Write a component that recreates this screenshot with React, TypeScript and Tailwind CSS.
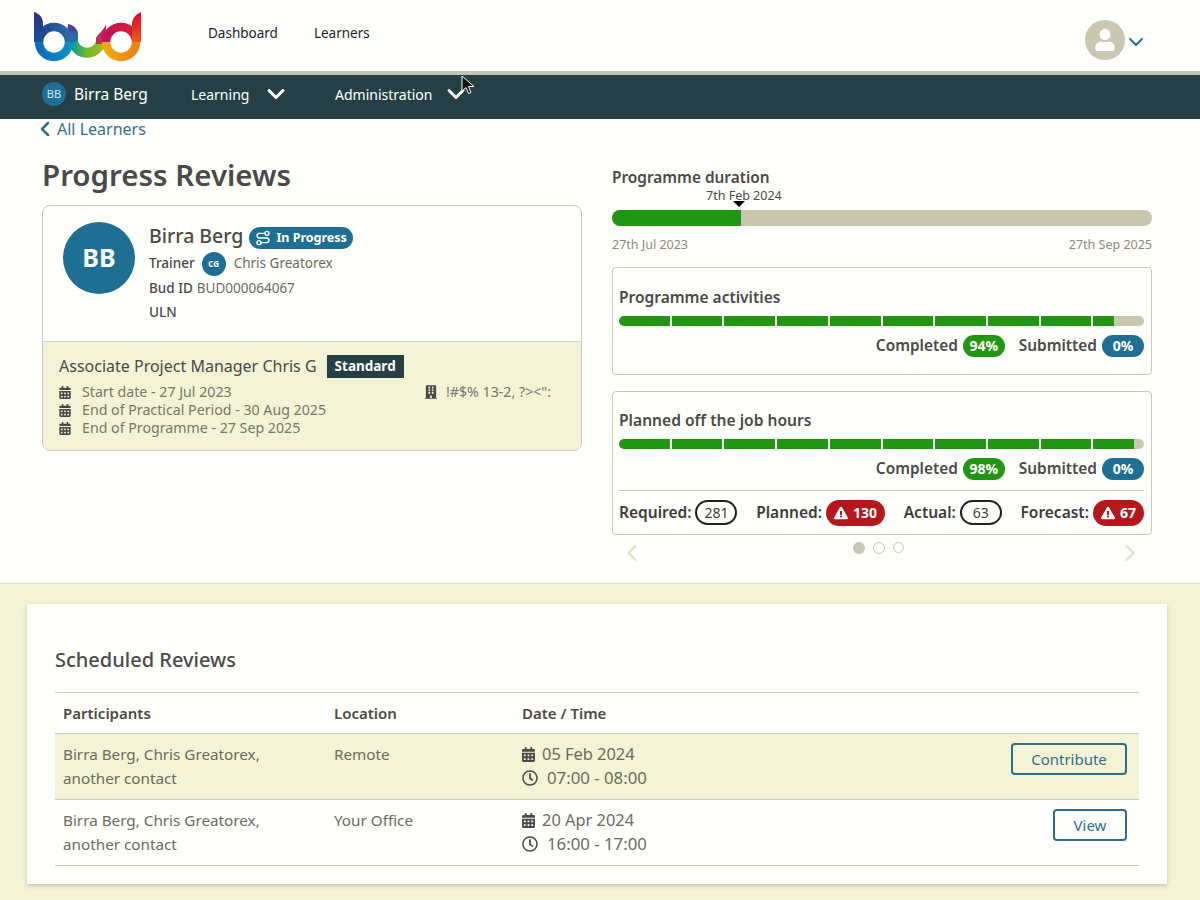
import { ChevronDown, ChevronLeft, ChevronRight, Route } from 'lucide-react'
import { FaBuilding, FaCalendarAlt, FaExclamationTriangle, FaRegClock, FaUser } from 'react-icons/fa'

function Logo() {
  return (
    <svg width="112" height="54" viewBox="32 9 112 54" fill="none">
      <defs>
        <linearGradient id="bStem" x1="0" y1="0" x2="0" y2="1">
          <stop offset="0" stopColor="#352a80" />
          <stop offset="1" stopColor="#14559f" />
        </linearGradient>
        <linearGradient id="bTop" x1="0" y1="0" x2="1" y2="0">
          <stop offset="0" stopColor="#1b3f8c" />
          <stop offset="1" stopColor="#2c6aa8" />
        </linearGradient>
        <linearGradient id="bBottom" x1="0" y1="0" x2="1" y2="0">
          <stop offset="0" stopColor="#0d6db8" />
          <stop offset="1" stopColor="#0a8fc8" />
        </linearGradient>
        <linearGradient id="uLeft" x1="0" y1="0" x2="0" y2="1">
          <stop offset="0" stopColor="#6a2a85" />
          <stop offset="1" stopColor="#0a86b8" />
        </linearGradient>
        <linearGradient id="uBottom" x1="0" y1="0" x2="1" y2="0">
          <stop offset="0" stopColor="#12a08c" />
          <stop offset="0.5" stopColor="#6fb82c" />
          <stop offset="1" stopColor="#a8b820" />
        </linearGradient>
        <linearGradient id="uRight" x1="0" y1="0" x2="0" y2="1">
          <stop offset="0" stopColor="#c9105f" />
          <stop offset="1" stopColor="#b83a50" />
        </linearGradient>
        <linearGradient id="dTop" x1="0" y1="0" x2="1" y2="0">
          <stop offset="0" stopColor="#c4105e" />
          <stop offset="1" stopColor="#d8202c" />
        </linearGradient>
        <linearGradient id="dBottom" x1="0" y1="0" x2="1" y2="0">
          <stop offset="0" stopColor="#f0a810" />
          <stop offset="1" stopColor="#ee8418" />
        </linearGradient>
        <linearGradient id="dStem" x1="0" y1="0" x2="0" y2="1">
          <stop offset="0" stopColor="#e00030" />
          <stop offset="1" stopColor="#e8601c" />
        </linearGradient>
      </defs>
      <path d="M73 42a14.500 14.500 0 0 0 28 0" stroke="url(#uBottom)" strokeWidth="10" />
      <path d="M68 24c5 1 10 5 10 10v8H66z" fill="url(#uLeft)" />
      <path d="M106 24c-1 5-8 10-10 14v6h10z" fill="url(#uRight)" />
      <path d="M39 42a15 15 0 0 1 30 0" stroke="url(#bTop)" strokeWidth="8.500" />
      <path d="M39 42a15 15 0 0 0 30 0" stroke="url(#bBottom)" strokeWidth="8.500" />
      <path d="M34 12c6 2 9 6 9 12v18h-9z" fill="url(#bStem)" />
      <path d="M106 42a15 15 0 0 1 30 0" stroke="url(#dTop)" strokeWidth="8.500" />
      <path d="M106 42a15 15 0 0 0 30 0" stroke="url(#dBottom)" strokeWidth="8.500" />
      <path d="M141 12c-6 3-9 7-9 12v18h9z" fill="url(#dStem)" />
    </svg>
  )
}

function Segments({ value }: { value: number }) {
  return (
    <div className="flex h-[10px] gap-[2px]">
      {Array.from({ length: 10 }).map((_, i) => {
        const fill = Math.max(0, Math.min(1, value / 10 - i)) * 100
        return (
          <div
            key={i}
            className={`flex-1 overflow-hidden bg-[#c8c6ae] ${i === 0 ? 'rounded-l-full' : ''} ${i === 9 ? 'rounded-r-full' : ''}`}
          >
            <div className="h-full bg-[#229512]" style={{ width: `${fill}%` }} />
          </div>
        )
      })}
    </div>
  )
}

function Badges({ completed }: { completed: string }) {
  return (
    <div className="mt-[8px] flex items-center justify-end text-[15.400px] font-semibold text-[#4a4a4a]">
      <span>Completed</span>
      <span className="ml-[5px] flex h-[22px] w-[42px] items-center justify-center rounded-full bg-[#229512] text-[14px] font-bold text-white">
        {completed}
      </span>
      <span className="ml-[14px]">Submitted</span>
      <span className="ml-[5px] flex h-[22px] w-[42px] items-center justify-center rounded-full bg-[#1f6f94] text-[14px] font-bold text-white">
        0%
      </span>
    </div>
  )
}

function Stat({ label, value, warn }: { label: string; value: string; warn?: boolean }) {
  return (
    <div className="flex items-center text-[15.500px] font-semibold text-[#3c3c3c]">
      <span>{label}</span>
      {warn ? (
        <span className="ml-[4px] flex h-[26px] items-center gap-[5px] rounded-full bg-[#b5181c] px-[8px] text-[14px] font-bold text-white">
          <FaExclamationTriangle className="h-[14px] w-[14px]" />
          {value}
        </span>
      ) : (
        <span className="ml-[4px] flex h-[25px] w-[42px] items-center justify-center rounded-full border-2 border-[#222] text-[14px] font-normal">
          {value}
        </span>
      )}
    </div>
  )
}

function DateLine({ children }: { children: string }) {
  return (
    <div className="flex h-[18px] items-center gap-[11px]">
      <FaCalendarAlt className="h-[13px] w-[12px] text-[#4a4a4a]" />
      <span>{children}</span>
    </div>
  )
}

function ReviewRow({ location, date, time, action, shaded, buttonWidth }: { location: string; date: string; time: string; action: string; shaded?: boolean; buttonWidth: string }) {
  return (
    <div className={`flex h-[66px] border-b border-[#c9c8b4] pt-[8px] text-[15.250px] leading-[24px] text-[#6b6b60] ${shaded ? 'bg-[#f5f3d6]' : ''}`}>
      <div className="w-[279px] pl-[8px]">
        Birra Berg, Chris Greatorex,
        <br />
        another contact
      </div>
      <div className="w-[188px]">{location}</div>
      <div className="flex-1">
        <div className="flex items-center gap-[7px] text-[16.400px]">
          <FaCalendarAlt className="h-[15px] w-[13px] text-[#4a4a4a]" />
          {date}
        </div>
        <div className="flex items-center gap-[9px] text-[16.800px]">
          <FaRegClock className="h-[16px] w-[16px] text-[#4a4a4a]" />
          {time}
        </div>
      </div>
      <div className="pr-[12px] pt-[1px]">
        <button className={`h-[32px] rounded-[4px] border-2 border-[#2c6f8c] text-[15px] text-[#2c6f8c] ${buttonWidth}`}>
          {action}
        </button>
      </div>
    </div>
  )
}

export default function App() {
  return (
    <div className="relative h-[900px] overflow-hidden bg-[#fffffb] font-['Noto_Sans',sans-serif]">
      {/* top bar */}
      <header className="flex h-[71px] items-start pl-[32px]">
        <div className="w-[176px] pt-[9px]">
          <Logo />
        </div>
        <nav className="flex gap-[36px] pt-[23px] text-[13.500px] leading-[20px] text-[#1c1c2c]">
          <a>Dashboard</a>
          <a>Learners</a>
        </nav>
        <div className="ml-auto mr-[52px] flex items-center pt-[20px]">
          <div className="flex h-[40px] w-[40px] items-center justify-center rounded-full bg-[#c9c8b0]">
            <FaUser className="h-[22px] w-[22px] text-white" />
          </div>
          <ChevronDown className="-ml-[1px] mt-[4px] h-[24px] w-[24px] text-[#1f6f94]" strokeWidth={2} />
        </div>
      </header>
      <nav className="flex h-[48px] items-center border-t-[4px] border-[#bfc4bb] bg-[#263f45] pb-[6px] pl-[42px] text-[15.500px] text-white">
        <div className="flex h-[24px] w-[24px] items-center justify-center rounded-full bg-[#1f6f94] text-[11px] text-[#cfeeff]">BB</div>
        <span className="ml-[8px] w-[117px] pt-[1px]">Birra Berg</span>
        <span className="w-[71px] text-[14px]">Learning</span>
        <ChevronDown className="h-[28px] w-[28px]" strokeWidth={2.500} />
        <span className="ml-[45px] w-[107px] text-[14px]">Administration</span>
        <ChevronDown className="h-[28px] w-[28px]" strokeWidth={2.500} />
      </nav>

      <main className="h-[465px] border-b border-[#e0dfc4] px-[42px]">
        <a className="flex h-[20px] items-center text-[16px] text-[#33708a]">
          <ChevronLeft className="-ml-[9px] h-[24px] w-[24px]" strokeWidth={2.500} />
          <span>All Learners</span>
        </a>
        <div className="flex gap-[30px]">
          {/* learner details */}
          <div className="w-[540px]">
            <h1 className="mt-[16px] text-[29.500px] font-semibold leading-[40px] text-[#4a4a4a]">Progress Reviews</h1>
            <div className="mt-[10px] h-[246px] overflow-hidden rounded-[8px] border border-[#c9c8b4]">
              <div className="flex h-[135px] pl-[20px] pt-[16px]">
                <div className="flex h-[72px] w-[72px] items-center justify-center rounded-full bg-[#1f6f94] text-[25px] font-bold text-white">BB</div>
                <div className="ml-[14px] text-[13.500px] text-[#6b6b60]">
                  <div className="flex h-[28px] items-center">
                    <span className="text-[19.500px] font-medium text-[#4a4a4a]">Birra Berg</span>
                    <span className="ml-[6px] mt-[4px] flex h-[22px] items-center gap-[5px] rounded-full bg-[#1f6f94] px-[6px] text-[12.500px] font-bold text-white">
                      <Route className="h-[16px] w-[16px]" />
                      In Progress
                    </span>
                  </div>
                  <div className="mt-[1px] flex h-[25px] items-center">
                    <span className="font-medium text-[#4a4a4a]">Trainer</span>
                    <span className="ml-[7px] flex h-[24px] w-[24px] items-center justify-center rounded-full bg-[#1f6f94] text-[8px] font-bold text-white">CG</span>
                    <span className="ml-[8px]">Chris Greatorex</span>
                  </div>
                  <div className="flex h-[24px] items-center gap-[4px]">
                    <span className="font-medium text-[#4a4a4a]">Bud ID</span>
                    <span>BUD000064067</span>
                  </div>
                  <div className="flex h-[24px] items-center font-medium text-[#4a4a4a]">ULN</div>
                </div>
              </div>
              <div className="h-[110px] border-t border-[#d8d6bc] bg-[#f5f3d6] px-[16px] pt-[11px] text-[14.200px] text-[#77776a]">
                <div className="flex h-[25px] items-center">
                  <span className="text-[16px] text-[#4a4a4a]">Associate Project Manager Chris G</span>
                  <span className="ml-[10px] mt-[2px] flex h-[23px] items-center bg-[#263f45] px-[8px] text-[13.500px] font-bold text-white">Standard</span>
                </div>
                <div className="mt-[5px] flex">
                  <div className="w-[366px]">
                    <DateLine>Start date - 27 Jul 2023</DateLine>
                    <DateLine>End of Practical Period - 30 Aug 2025</DateLine>
                    <DateLine>End of Programme - 27 Sep 2025</DateLine>
                  </div>
                  <div className="flex h-[18px] items-center gap-[9px]">
                    <FaBuilding className="h-[14px] w-[12px] text-[#4a4a4a]" />
                    <span>!#$% 13-2, ?&gt;&lt;":</span>
                  </div>
                </div>
              </div>
            </div>
          </div>

          {/* progress */}
          <div className="w-[540px]">
            <div className="mt-[28px] text-[15.400px] font-semibold leading-[22px] text-[#4a4a4a]">Programme duration</div>
            <div className="relative mt-[21px] h-[16px] rounded-full bg-[#c8c6ae]">
              <div className="h-full w-[129px] rounded-l-full bg-[#229512]" />
              <div className="absolute bottom-[23px] left-[94px] text-[12.500px] leading-[14px] text-[#4a4a4a]">7th Feb 2024</div>
              <div className="absolute -top-[9px] left-[121px] h-0 w-0 border-x-[6px] border-t-[6px] border-x-transparent border-t-black" />
            </div>
            <div className="mt-[10px] flex justify-between text-[12.500px] leading-[18px] text-[#8a8a7c]">
              <span>27th Jul 2023</span>
              <span>27th Sep 2025</span>
            </div>
            <div className="mt-[13px] h-[108px] rounded-[4px] border border-[#c9c8b4] pl-[6px] pr-[7px] pt-[18px]">
              <div className="text-[15.500px] font-semibold leading-[22px] text-[#4a4a4a]">Programme activities</div>
              <div className="mt-[8px]">
                <Segments value={94} />
              </div>
              <Badges completed="94%" />
            </div>
            <div className="mt-[16px] h-[144px] rounded-[4px] border border-[#c9c8b4] pl-[6px] pr-[7px] pt-[17px]">
              <div className="text-[15.600px] font-semibold leading-[22px] text-[#4a4a4a]">Planned off the job hours</div>
              <div className="mt-[8px]">
                <Segments value={98} />
              </div>
              <Badges completed="98%" />
              <div className="mt-[10px] flex h-[46px] items-center justify-between border-t border-[#c9c8b4] pb-[2px]">
                <Stat label="Required:" value="281" />
                <Stat label="Planned:" value="130" warn />
                <Stat label="Actual:" value="63" />
                <Stat label="Forecast:" value="67" warn />
              </div>
            </div>
            <div className="flex h-[36px] items-start justify-between pl-[6px] pr-[8px] text-[#e2e1cc]">
              <ChevronLeft className="mt-[4px] h-[28px] w-[28px]" />
              <div className="mr-[6px] mt-[7px] flex gap-[8px]">
                <span className="h-[12px] w-[12px] rounded-full bg-[#c8c6ae]" />
                <span className="h-[12px] w-[12px] rounded-full border border-[#c8c6ae]" />
                <span className="h-[11px] w-[11px] rounded-full border border-[#c8c6ae]" />
              </div>
              <ChevronRight className="mt-[4px] h-[28px] w-[28px]" />
            </div>
          </div>
        </div>
      </main>

      {/* scheduled reviews */}
      <section className="h-[316px] bg-[#f5f3d6] pl-[27px] pr-[33px] pt-[20px]">
        <div className="h-[280px] bg-[#fffffb] px-[28px] pt-[43px] shadow-[0_2px_4px_rgba(120,120,90,0.35)]">
          <h2 className="text-[20px] font-medium leading-[26px] text-[#4a4a4a]">Scheduled Reviews</h2>
          <div className="mt-[19px] flex h-[42px] items-center border-y border-[#c9c8b4] text-[15px] font-semibold text-[#4a4a4a]">
            <div className="w-[279px] pl-[8px]">Participants</div>
            <div className="w-[188px]">Location</div>
            <div>Date / Time</div>
          </div>
          <ReviewRow location="Remote" date="05 Feb 2024" time="07:00 - 08:00" action="Contribute" shaded buttonWidth="w-[116px]" />
          <ReviewRow location="Your Office" date="20 Apr 2024" time="16:00 - 17:00" action="View" buttonWidth="w-[74px]" />
        </div>
      </section>

      {/* mouse pointer caught in the screenshot */}
      <svg className="absolute left-[461px] top-[75px]" width="14" height="20" viewBox="0 0 14 20">
        <path d="M1 1v15l4-3.500 2.500 6 2.500-1-2.500-6H13z" fill="#111" stroke="#fff" strokeWidth="1" />
      </svg>
    </div>
  )
}
